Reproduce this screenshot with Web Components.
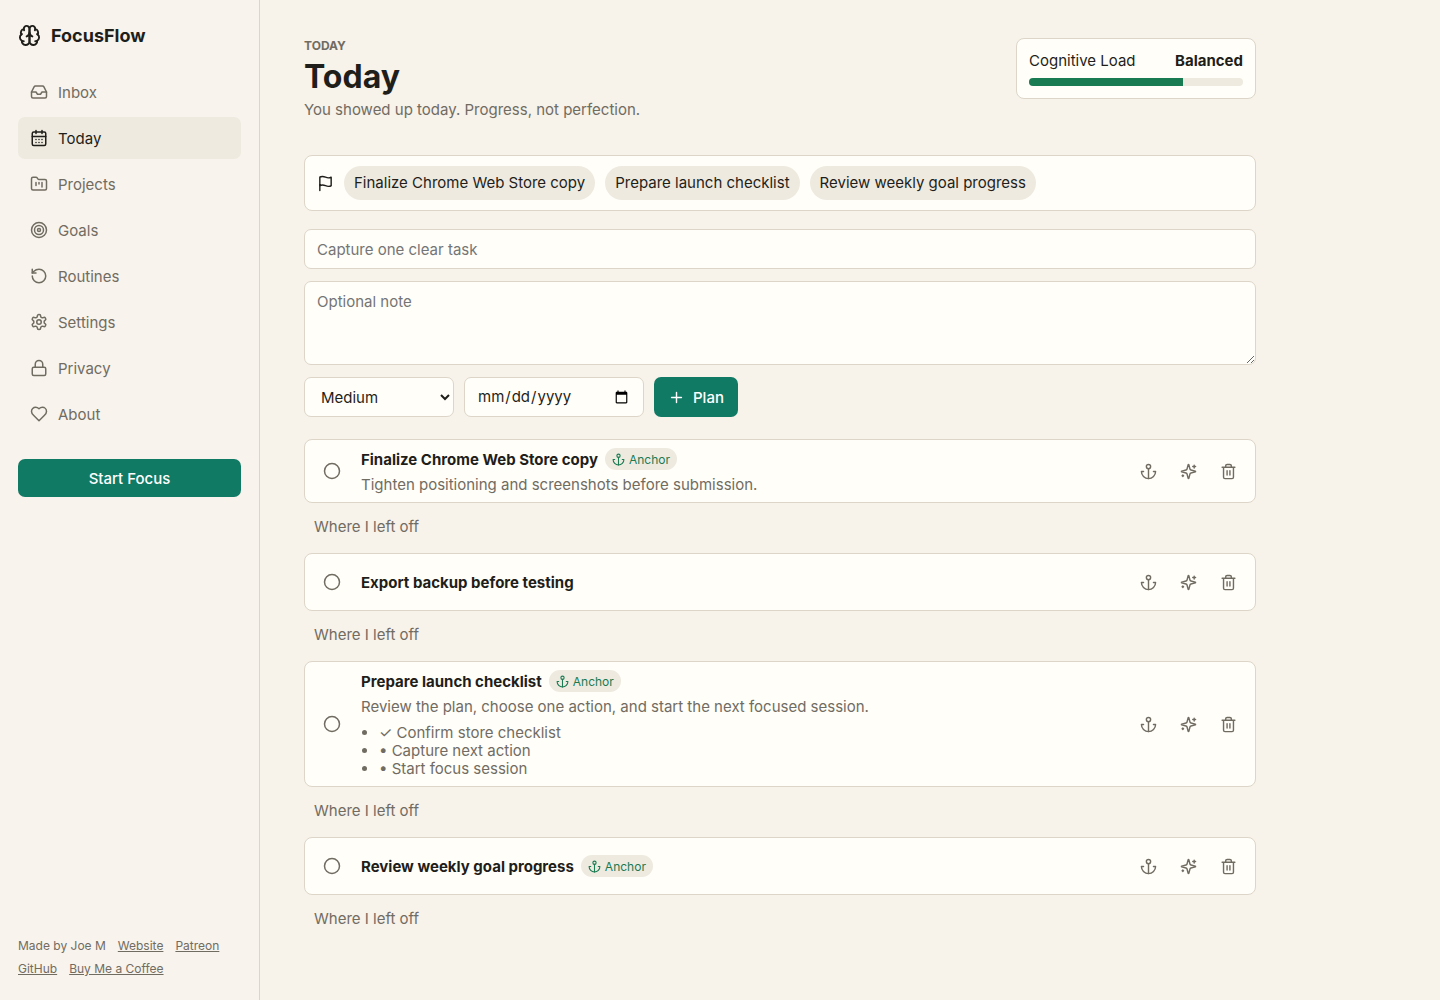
<!DOCTYPE html>
<html lang="en">
<head>
<meta charset="utf-8">
<meta name="viewport" content="width=device-width, initial-scale=1">
<title>FocusFlow</title>
<style>
  :root {
    --bg: #f7f2ea;
    --sidebar: #f8f3ec;
    --surface: #fffef9;
    --soft: #eeeae0;
    --active: #eeeadf;
    --line: #ddd5c8;
    --text: #1f1e1a;
    --muted: #716c62;
    --accent: #117a65;
    --green: #197b52;
  }
  body {
    margin: 0;
    background: var(--bg);
    color: var(--text);
    font: 15px/18px Inter, sans-serif;
  }
</style>
</head>
<body>
<focus-app></focus-app>

<script>
const icons = {
  brain: `<path d="M12 5a3 3 0 1 0-5.997.125 4 4 0 0 0-2.526 5.77 4 4 0 0 0 .556 6.588A4 4 0 1 0 12 18Z"/><path d="M12 5a3 3 0 1 1 5.997.125 4 4 0 0 1 2.526 5.77 4 4 0 0 1-.556 6.588A4 4 0 1 1 12 18Z"/><path d="M15 13a4.5 4.5 0 0 1-3-4 4.5 4.5 0 0 1-3 4"/><path d="M17.599 6.5a3 3 0 0 0 .399-1.375"/><path d="M6.003 5.125A3 3 0 0 0 6.401 6.5"/><path d="M3.477 10.896a4 4 0 0 1 .585-.396"/><path d="M19.938 10.5a4 4 0 0 1 .585.396"/><path d="M6 18a4 4 0 0 1-1.967-.516"/><path d="M19.967 17.484A4 4 0 0 1 18 18"/>`,
  inbox: `<path d="M22 12h-6l-2 3h-4l-2-3H2"/><path d="M5.45 5.11 2 12v6a2 2 0 0 0 2 2h16a2 2 0 0 0 2-2v-6l-3.45-6.89A2 2 0 0 0 16.76 4H7.24a2 2 0 0 0-1.79 1.11z"/>`,
  calendar: `<path d="M8 2v4M16 2v4"/><rect width="18" height="18" x="3" y="4" rx="2"/><path d="M3 10h18M8 14h.01M12 14h.01M16 14h.01M8 18h.01M12 18h.01M16 18h.01"/>`,
  folder: `<path d="M4 20h16a2 2 0 0 0 2-2V8a2 2 0 0 0-2-2h-7.93a2 2 0 0 1-1.66-.9l-.82-1.2A2 2 0 0 0 7.93 3H4a2 2 0 0 0-2 2v13c0 1.1.9 2 2 2Z"/><path d="M8 10v4M12 10v2M16 10v6"/>`,
  target: `<circle cx="12" cy="12" r="10"/><circle cx="12" cy="12" r="6"/><circle cx="12" cy="12" r="2"/>`,
  rotate: `<path d="M3 12a9 9 0 1 0 9-9 9.75 9.75 0 0 0-6.74 2.74L3 8"/><path d="M3 3v5h5"/>`,
  settings: `<path d="M12.22 2h-.44a2 2 0 0 0-2 2v.18a2 2 0 0 1-1 1.73l-.43.25a2 2 0 0 1-2 0l-.15-.08a2 2 0 0 0-2.73.73l-.22.38a2 2 0 0 0 .73 2.73l.15.1a2 2 0 0 1 1 1.72v.51a2 2 0 0 1-1 1.74l-.15.09a2 2 0 0 0-.73 2.73l.22.38a2 2 0 0 0 2.73.73l.15-.08a2 2 0 0 1 2 0l.43.25a2 2 0 0 1 1 1.73V20a2 2 0 0 0 2 2h.44a2 2 0 0 0 2-2v-.18a2 2 0 0 1 1-1.73l.43-.25a2 2 0 0 1 2 0l.15.08a2 2 0 0 0 2.73-.73l.22-.39a2 2 0 0 0-.73-2.73l-.15-.08a2 2 0 0 1-1-1.74v-.5a2 2 0 0 1 1-1.74l.15-.09a2 2 0 0 0 .73-2.73l-.22-.38a2 2 0 0 0-2.73-.73l-.15.08a2 2 0 0 1-2 0l-.43-.25a2 2 0 0 1-1-1.73V4a2 2 0 0 0-2-2z"/><circle cx="12" cy="12" r="3"/>`,
  lock: `<rect width="18" height="11" x="3" y="11" rx="2"/><path d="M7 11V7a5 5 0 0 1 10 0v4"/>`,
  heart: `<path d="M19 14c1.49-1.46 3-3.21 3-5.5A5.5 5.5 0 0 0 16.5 3c-1.76 0-3 .5-4.5 2-1.5-1.5-2.74-2-4.5-2A5.5 5.5 0 0 0 2 8.5c0 2.3 1.5 4.05 3 5.5l7 7Z"/>`,
  flag: `<path d="M4 15s1-1 4-1 5 2 8 2 4-1 4-1V3s-1 1-4 1-5-2-8-2-4 1-4 1z"/><path d="M4 22v-7"/>`,
  plus: `<path d="M5 12h14M12 5v14"/>`,
  circle: `<circle cx="12" cy="12" r="10"/>`,
  anchor: `<path d="M12 22V8"/><path d="M5 12H2a10 10 0 0 0 20 0h-3"/><circle cx="12" cy="5" r="3"/>`,
  sparkles: `<path d="M9.937 15.5A2 2 0 0 0 8.5 14.063l-6.135-1.582a.5.5 0 0 1 0-.962L8.5 9.936A2 2 0 0 0 9.937 8.5l1.582-6.135a.5.5 0 0 1 .963 0L14.063 8.5A2 2 0 0 0 15.5 9.937l6.135 1.581a.5.5 0 0 1 0 .964L15.5 14.063a2 2 0 0 0-1.437 1.437l-1.582 6.135a.5.5 0 0 1-.963 0z"/><path d="M20 3v4M22 5h-4M4 17v2M5 18H3"/>`,
  trash: `<path d="M10 11v6M14 11v6M19 6v14a2 2 0 0 1-2 2H7a2 2 0 0 1-2-2V6M3 6h18M8 6V4a2 2 0 0 1 2-2h4a2 2 0 0 1 2 2v2"/>`
};

// attaches an open shadow root filled from an html string
function render(el, html) {
  const template = document.createElement("template");
  template.innerHTML = html;
  el.attachShadow({ mode: "open" }).appendChild(template.content.cloneNode(true));
}

customElements.define("ff-icon", class extends HTMLElement {
  connectedCallback() {
    if (this.shadowRoot) return;
    const size = this.getAttribute("size") || 17;
    render(this, `
      <style>
        :host { display: inline-flex; flex: none; }
        svg { display: block; fill: none; stroke: currentColor; stroke-width: 2; stroke-linecap: round; stroke-linejoin: round; }
      </style>
      <svg width="${size}" height="${size}" viewBox="0 0 24 24" aria-hidden="true">${icons[this.getAttribute("name")]}</svg>
    `);
  }
});

customElements.define("nav-item", class extends HTMLElement {
  connectedCallback() {
    if (this.shadowRoot) return;
    render(this, `
      <style>
        :host { display: block; color: var(--muted); line-height: normal; }
        :host([active]) { color: var(--text); }
        :host([active]) a { background: var(--active); }
        a {
          display: flex;
          align-items: center;
          gap: 10px;
          height: 42px;
          padding: 0 12px;
          border-radius: 7px;
          color: inherit;
          text-decoration: none;
        }
      </style>
      <a href="#"><ff-icon name="${this.getAttribute("icon")}" size="18"></ff-icon><slot></slot></a>
    `);
  }
});

customElements.define("side-bar", class extends HTMLElement {
  constructor() {
    super();
    render(this, `
      <style>
        :host {
          display: flex;
          flex-direction: column;
          box-sizing: border-box;
          padding: 24px 18px;
          background: var(--sidebar);
          border-right: 1px solid var(--line);
        }
        .brand {
          display: flex;
          align-items: center;
          gap: 10px;
          height: 23px;
          margin-bottom: 24px;
          font-size: 18px;
          font-weight: 700;
        }
        nav { display: grid; gap: 4px; }
        button {
          height: 38px;
          margin-top: 24px;
          border: 0;
          border-radius: 7px;
          background: var(--accent);
          color: #fff;
          font: 500 15px Inter, sans-serif;
        }
        footer {
          display: flex;
          flex-wrap: wrap;
          gap: 8px 12px;
          margin-top: auto;
          color: var(--muted);
          font-size: 12px;
          line-height: 15px;
        }
        footer a { color: inherit; }
      </style>
      <div class="brand"><ff-icon name="brain" size="23"></ff-icon><span>FocusFlow</span></div>
      <nav>
        <nav-item icon="inbox">Inbox</nav-item>
        <nav-item icon="calendar" active>Today</nav-item>
        <nav-item icon="folder">Projects</nav-item>
        <nav-item icon="target">Goals</nav-item>
        <nav-item icon="rotate">Routines</nav-item>
        <nav-item icon="settings">Settings</nav-item>
        <nav-item icon="lock">Privacy</nav-item>
        <nav-item icon="heart">About</nav-item>
      </nav>
      <button type="button">Start Focus</button>
      <footer>
        <span>Made by Joe M</span>
        <a href="#">Website</a>
        <a href="#">Patreon</a>
        <a href="#">GitHub</a>
        <a href="#">Buy Me a Coffee</a>
      </footer>
    `);
  }
});

customElements.define("load-meter", class extends HTMLElement {
  connectedCallback() {
    if (this.shadowRoot) return;
    const value = this.getAttribute("value");
    render(this, `
      <style>
        :host {
          display: block;
          box-sizing: border-box;
          width: 240px;
          padding: 12px;
          border: 1px solid var(--line);
          border-radius: 8px;
          background: var(--surface);
        }
        .row { display: flex; justify-content: space-between; margin-bottom: 8px; line-height: normal; }
        .bar { height: 8px; border-radius: 8px; background: var(--soft); overflow: hidden; }
        .fill { width: ${value}%; height: 100%; background: var(--green); }
      </style>
      <div class="row"><span>Cognitive Load</span><strong><slot></slot></strong></div>
      <div class="bar" role="progressbar" aria-label="Cognitive Load" aria-valuenow="${value}"><div class="fill"></div></div>
    `);
  }
});

customElements.define("page-header", class extends HTMLElement {
  constructor() {
    super();
    render(this, `
      <style>
        :host { display: flex; justify-content: space-between; align-items: flex-start; margin-bottom: 36px; }
        .eyebrow { color: var(--muted); font-size: 12px; line-height: 15px; font-weight: 700; text-transform: uppercase; }
        h1 { margin: 4px 0; font-size: 32px; line-height: 40px; }
        p { margin: 0; color: var(--muted); }
      </style>
      <div>
        <div class="eyebrow">Today</div>
        <h1>Today</h1>
        <p>You showed up today. Progress, not perfection.</p>
      </div>
      <load-meter value="72">Balanced</load-meter>
    `);
  }
});

customElements.define("anchor-strip", class extends HTMLElement {
  constructor() {
    super();
    render(this, `
      <style>
        :host {
          display: flex;
          flex-wrap: wrap;
          align-items: center;
          gap: 10px;
          padding: 10px 12px;
          border: 1px solid var(--line);
          border-radius: 8px;
          background: var(--surface);
        }
        ::slotted(span) { padding: 8px 10px; border-radius: 17px; background: var(--soft); }
      </style>
      <ff-icon name="flag"></ff-icon>
      <slot></slot>
    `);
  }
});

customElements.define("task-form", class extends HTMLElement {
  constructor() {
    super();
    render(this, `
      <style>
        :host { display: block; }
        form { display: grid; gap: 12px; }
        input, textarea, select {
          box-sizing: border-box;
          width: 100%;
          height: 40px;
          margin: 0;
          padding: 0 12px;
          border: 1px solid var(--line);
          border-radius: 7px;
          background: var(--surface);
          color: var(--text);
          font: inherit;
        }
        textarea { display: block; height: 84px; padding: 11px 12px; resize: vertical; }
        .row { display: flex; gap: 10px; }
        select { width: 150px; }
        input[type=date] { width: 180px; }
        button {
          display: flex;
          align-items: center;
          gap: 8px;
          height: 40px;
          padding: 0 14px;
          border: 0;
          border-radius: 7px;
          background: var(--accent);
          color: #fff;
          font: 500 15px Inter, sans-serif;
        }
      </style>
      <form>
        <input type="text" aria-label="Task" placeholder="Capture one clear task">
        <textarea aria-label="Note" placeholder="Optional note"></textarea>
        <div class="row">
          <select aria-label="Priority">
            <option>Low</option>
            <option selected>Medium</option>
            <option>High</option>
          </select>
          <input type="date" aria-label="Due date">
          <button type="button"><ff-icon name="plus"></ff-icon>Plan</button>
        </div>
      </form>
    `);
  }
});

customElements.define("task-card", class extends HTMLElement {
  connectedCallback() {
    if (this.shadowRoot) return;
    const badge = this.hasAttribute("anchored")
      ? `<span class="badge"><ff-icon name="anchor" size="13"></ff-icon>Anchor</span>`
      : "";
    render(this, `
      <style>
        :host { display: grid; gap: 4px; justify-items: start; }
        article {
          display: flex;
          align-items: center;
          gap: 10px;
          box-sizing: border-box;
          width: 100%;
          min-height: 58px;
          padding: 8px;
          border: 1px solid var(--line);
          border-radius: 8px;
          background: var(--surface);
        }
        .body { flex: 1; color: var(--muted); }
        .title { display: flex; align-items: center; gap: 7px; color: var(--text); line-height: normal; }
        .badge {
          display: inline-flex;
          align-items: center;
          gap: 4px;
          height: 22px;
          padding: 0 7px;
          border-radius: 11px;
          background: var(--soft);
          color: var(--green);
          font-size: 12px;
          line-height: 15px;
        }
        .actions { display: flex; gap: 2px; }
        button {
          height: 38px;
          padding: 0 10px;
          border: 0;
          background: none;
          color: var(--muted);
          font: 15px Inter, sans-serif;
        }
        .icon { display: grid; place-items: center; width: 38px; padding: 0; }
        ::slotted(p) { margin: 6px 0 0; }
        ::slotted(ul) { margin: 8px 0 0; padding-left: 18px; }
      </style>
      <article>
        <button class="icon" type="button" aria-label="Complete"><ff-icon name="circle" size="18"></ff-icon></button>
        <div class="body">
          <div class="title"><strong>${this.getAttribute("name")}</strong>${badge}</div>
          <slot></slot>
        </div>
        <div class="actions">
          <button class="icon" type="button" aria-label="Anchor"><ff-icon name="anchor"></ff-icon></button>
          <button class="icon" type="button" aria-label="Break down"><ff-icon name="sparkles"></ff-icon></button>
          <button class="icon" type="button" aria-label="Delete"><ff-icon name="trash"></ff-icon></button>
        </div>
      </article>
      <button type="button">Where I left off</button>
    `);
  }
});

customElements.define("focus-app", class extends HTMLElement {
  constructor() {
    super();
    render(this, `
      <style>
        :host { display: grid; grid-template-columns: 260px 1fr; min-height: 100vh; }
        main { box-sizing: border-box; max-width: 1040px; padding: 38px 44px; }
        task-form { margin: 18px 0 22px; }
        .tasks { display: grid; gap: 8px; }
      </style>
      <side-bar></side-bar>
      <main>
        <page-header></page-header>
        <anchor-strip>
          <span>Finalize Chrome Web Store copy</span>
          <span>Prepare launch checklist</span>
          <span>Review weekly goal progress</span>
        </anchor-strip>
        <task-form></task-form>
        <section class="tasks">
          <task-card name="Finalize Chrome Web Store copy" anchored>
            <p>Tighten positioning and screenshots before submission.</p>
          </task-card>
          <task-card name="Export backup before testing"></task-card>
          <task-card name="Prepare launch checklist" anchored>
            <p>Review the plan, choose one action, and start the next focused session.</p>
            <ul>
              <li>✓ Confirm store checklist</li>
              <li>• Capture next action</li>
              <li>• Start focus session</li>
            </ul>
          </task-card>
          <task-card name="Review weekly goal progress" anchored></task-card>
        </section>
      </main>
    `);
  }
});
</script>
</body>
</html>
